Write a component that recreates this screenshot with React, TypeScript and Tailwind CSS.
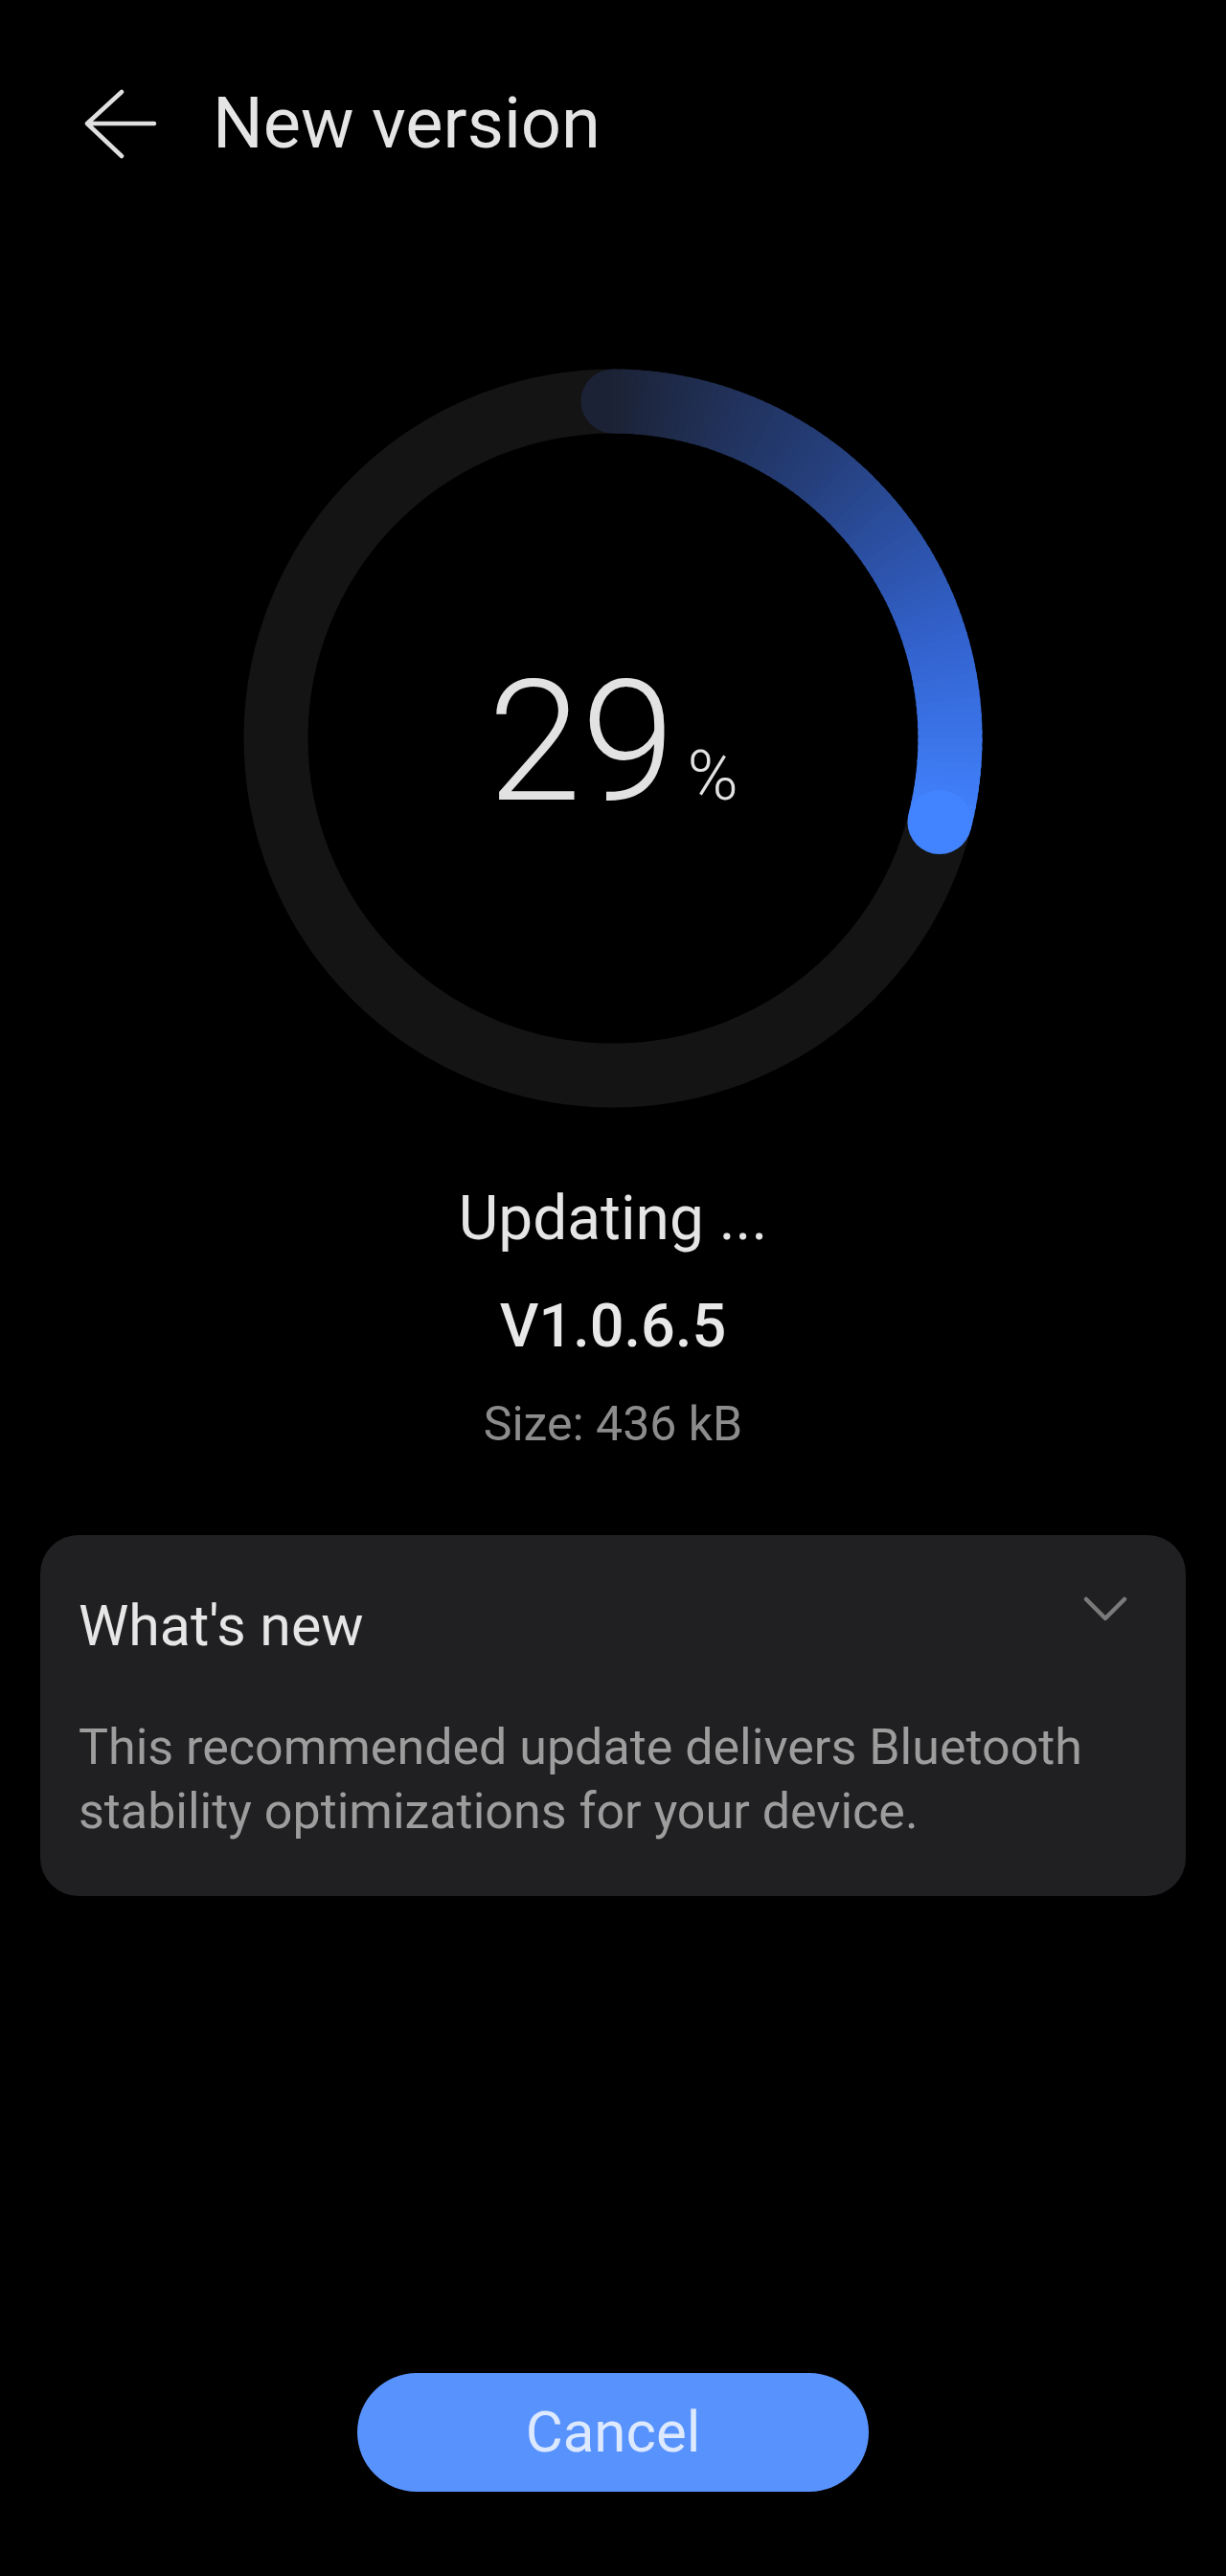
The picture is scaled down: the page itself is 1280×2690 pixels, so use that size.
import { ReactNode } from 'react';

const progress = 29;

const stops: [number, number[]][] = [
  [0, [28, 34, 54]],
  [0.35, [37, 62, 122]],
  [0.7, [50, 98, 205]],
  [1, [66, 131, 255]],
];

const colorAt = (t: number) => {
  for (let i = 1; i < stops.length; i++) {
    const [t1, c1] = stops[i];
    const [t0, c0] = stops[i - 1];
    if (t <= t1) {
      const k = (t - t0) / (t1 - t0);
      const c = c0.map((v, j) => Math.round(v + (c1[j] - v) * k));
      return `rgb(${c[0]},${c[1]},${c[2]})`;
    }
  }
  return 'rgb(66,131,255)';
};

const C = 386;
const R = 352;
const point = (deg: number) => {
  const a = (deg * Math.PI) / 180;
  return [C + R * Math.sin(a), C - R * Math.cos(a)];
};

function ProgressRing({ value }: { value: number }) {
  const sweep = (value / 100) * 360;
  const n = 80;
  const segs: ReactNode[] = [];
  for (let i = 0; i < n; i++) {
    const a0 = (sweep * i) / n;
    const a1 = Math.min(sweep, (sweep * (i + 1)) / n + 0.6);
    const [x0, y0] = point(a0);
    const [x1, y1] = point(a1);
    segs.push(
      <path
        key={i}
        d={`M${x0} ${y0} A${R} ${R} 0 0 1 ${x1} ${y1}`}
        stroke={colorAt((i + 0.5) / n)}
        strokeWidth={67}
        fill="none"
      />
    );
  }
  const [sx, sy] = point(0);
  const [ex, ey] = point(sweep);
  return (
    <svg width="772" height="772" viewBox="0 0 772 772" className="absolute inset-0">
      <circle cx={C} cy={C} r={R} stroke="#141414" strokeWidth={67} fill="none" />
      <circle cx={sx} cy={sy} r={33.5} fill={colorAt(0)} />
      {segs}
      <circle cx={ex} cy={ey} r={33.5} fill={colorAt(1)} />
    </svg>
  );
}

export default function App() {
  return (
    <div className="min-h-[2690px] w-[1280px] bg-black text-[#e5e5e5] flex flex-col font-['Roboto','Noto_Sans',sans-serif]">
      {/* header */}
      <div className="flex items-center h-[100px] mt-[79px] pl-[88px]">
        <svg width="76" height="76" viewBox="0 0 76 76" fill="none">
          <path
            d="M39 5 L3 38 L39 72 M3 38 H73"
            stroke="#e0e0e0"
            strokeWidth={4.5}
            strokeLinecap="round"
            strokeLinejoin="round"
          />
        </svg>
        <span className="ml-[58px] text-[74px] leading-[100px] text-[#e5e5e5]">New version</span>
      </div>

      {/* progress */}
      <div className="relative mx-auto mt-[206px] w-[772px] h-[772px]">
        <ProgressRing value={progress} />
        <div className="absolute inset-0 flex items-center justify-center pt-[8px]">
          <div className="flex items-baseline">
            <span className="text-[176px] leading-none font-light text-[#e2e2e2]">{progress}</span>
            <span className="ml-[13px] text-[72px] leading-none font-light text-[#e2e2e2]">%</span>
          </div>
        </div>
      </div>

      <div className="mt-[76px] text-center text-[64px] leading-[80px] text-[#e5e5e5]">Updating ...</div>
      <div className="mt-[32px] text-center text-[63px] leading-[80px] font-medium text-[#e8e8e8]">V1.0.6.5</div>
      <div className="mt-[32px] text-center text-[50px] leading-[60px] text-[#8c8c8c]">Size: 436 kB</div>

      {/* what's new */}
      <div className="mt-[86px] mx-[42px] rounded-[40px] bg-[#202022] pt-[59px] pb-[55px] pl-[40px] pr-[61px]">
        <div className="flex items-start justify-between">
          <span className="text-[59px] leading-[72px] text-[#e6e6e6]">What's new</span>
          <svg width="46" height="26" viewBox="0 0 46 26" fill="none" className="mt-[5px]">
            <path d="M3 3 L23 23 L43 3" stroke="#7a7a7a" strokeWidth={4.5} strokeLinecap="round" strokeLinejoin="round" />
          </svg>
        </div>
        <p className="mt-[57px] text-[52px] leading-[67px] text-[#9d9d9d]">
          This recommended update delivers Bluetooth stability optimizations for your device.
        </p>
      </div>

      {/* cancel */}
      <button className="mt-[498px] mx-auto w-[534px] h-[124px] rounded-full bg-[#5892fd] text-[60px] text-[#dce9ff]">
        Cancel
      </button>
    </div>
  );
}
